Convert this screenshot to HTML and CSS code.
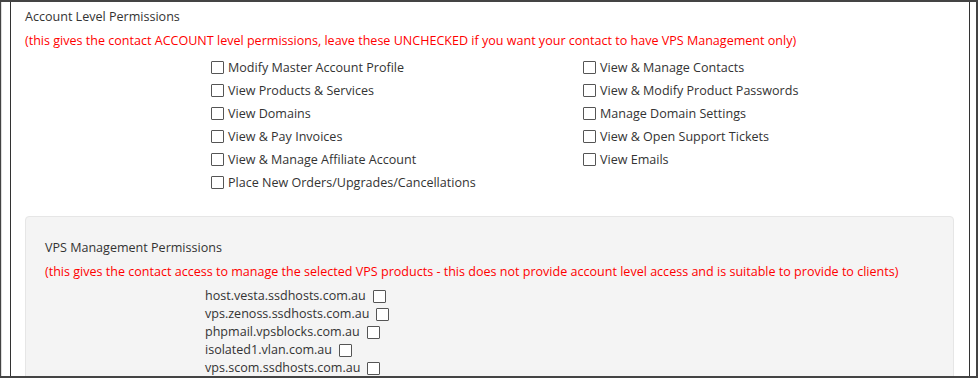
FILE: index.html
```html
<!DOCTYPE html>
<html lang="en">
<head>
  <meta charset="UTF-8">
  <title>Contact Permissions</title>
  <link rel="stylesheet" href="styles.css">
</head>
<body>
  <div class="frame">
    <div class="panel">
      <h4 class="section-title">Account Level Permissions</h4>
      <p class="note">(this gives the contact ACCOUNT level permissions, leave these UNCHECKED if you want your contact to have VPS Management only)</p>

      <div class="perm-grid">
        <label class="perm"><input type="checkbox"> Modify Master Account Profile</label>
        <label class="perm"><input type="checkbox"> View &amp; Manage Contacts</label>
        <label class="perm"><input type="checkbox"> View Products &amp; Services</label>
        <label class="perm"><input type="checkbox"> View &amp; Modify Product Passwords</label>
        <label class="perm"><input type="checkbox"> View Domains</label>
        <label class="perm"><input type="checkbox"> Manage Domain Settings</label>
        <label class="perm"><input type="checkbox"> View &amp; Pay Invoices</label>
        <label class="perm"><input type="checkbox"> View &amp; Open Support Tickets</label>
        <label class="perm"><input type="checkbox"> View &amp; Manage Affiliate Account</label>
        <label class="perm"><input type="checkbox"> View Emails</label>
        <label class="perm"><input type="checkbox"> Place New Orders/Upgrades/Cancellations</label>
      </div>

      <div class="well">
        <h4 class="section-title">VPS Management Permissions</h4>
        <p class="note">(this gives the contact access to manage the selected VPS products - this does not provide account level access and is suitable to provide to clients)</p>
        <div class="hosts">
          <label class="host">host.vesta.ssdhosts.com.au <input type="checkbox"></label>
          <label class="host">vps.zenoss.ssdhosts.com.au <input type="checkbox"></label>
          <label class="host">phpmail.vpsblocks.com.au <input type="checkbox"></label>
          <label class="host">isolated1.vlan.com.au <input type="checkbox"></label>
          <label class="host">vps.scom.ssdhosts.com.au <input type="checkbox"></label>
        </div>
      </div>
    </div>
  </div>
</body>
</html>
```

FILE: styles.css
```css
* {
  margin: 0;
  padding: 0;
  box-sizing: border-box;
}

body {
  font-family: 'Open Sans', sans-serif;
  font-size: 12.56px;
  color: #333;
  background: #fff;
}

.frame {
  height: 378px;
  overflow: hidden;
  border: 2px solid #444;
  border-left: 1px solid #444;
  padding: 0 6px 0 9px;
  box-shadow: inset 1px 0 0 #ddd;
}

.panel {
  height: 100%;
  border-left: 1px solid #333;
  border-right: 1px solid #333;
  padding: 5px 15px 0 14px;
}

.section-title {
  font-size: 12.56px;
  font-weight: 400;
  line-height: 20px;
}

.note {
  color: #f00;
  line-height: 20px;
  margin-top: 4px;
}

.perm-grid {
  display: grid;
  grid-template-columns: 372px auto;
  margin: 5px 0 0 186px;
}

.perm {
  display: flex;
  align-items: center;
  gap: 4px;
  height: 23px;
}

input[type="checkbox"] {
  appearance: none;
  width: 13px;
  height: 13px;
  border: 1px solid #555;
  background: #fff;
  border-radius: 1px;
  margin: 0;
  flex: none;
}

.well {
  margin-top: 22px;
  background: #f4f4f4;
  border: 1px solid #e6e6e6;
  border-radius: 4px;
  padding: 21px 18px 20px 19px;
  height: 200px;
}

.hosts {
  margin: 4px 0 0 160px;
  display: flex;
  flex-direction: column;
  align-items: flex-start;
}

.host {
  display: flex;
  align-items: center;
  gap: 7px;
  height: 18px;
}

.host input[type="checkbox"] {
  margin-top: 3px;
}
```
